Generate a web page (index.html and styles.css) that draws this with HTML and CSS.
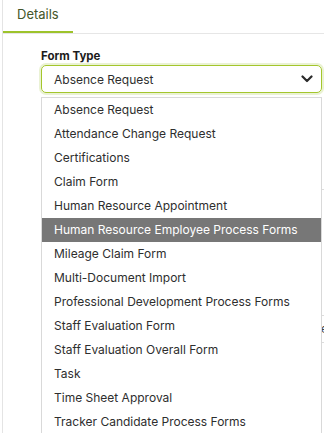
FILE: index.html
```html
<!DOCTYPE html>
<html lang="en">
<head>
  <meta charset="UTF-8">
  <title>Details</title>
  <link rel="stylesheet" href="styles.css">
</head>
<body>
  <div class="page">
    <div class="tabs">
      <div class="tab active">Details</div>
    </div>

    <div class="form">
      <label class="field-label">Form Type</label>
      <div class="select-wrap">
        <div class="select">
          <span>Absence Request</span>
          <svg class="chevron" width="12" height="8" viewBox="0 0 12 8">
            <path d="M1.5 1.5 L6 6 L10.5 1.5" fill="none" stroke="#2b2b2b" stroke-width="2.2" stroke-linecap="round" stroke-linejoin="round"/>
          </svg>
        </div>

        <ul class="options">
          <li>Absence Request</li>
          <li>Attendance Change Request</li>
          <li>Certifications</li>
          <li>Claim Form</li>
          <li>Human Resource Appointment</li>
          <li class="selected">Human Resource Employee Process Forms</li>
          <li>Mileage Claim Form</li>
          <li>Multi-Document Import</li>
          <li>Professional Development Process Forms</li>
          <li>Staff Evaluation Form</li>
          <li>Staff Evaluation Overall Form</li>
          <li>Task</li>
          <li>Time Sheet Approval</li>
          <li>Tracker Candidate Process Forms</li>
        </ul>
      </div>

      <!-- fields hidden under the open list -->
      <div class="behind">
        <div class="behind-line"></div>
        <div class="behind-box">Due date</div>
      </div>
    </div>
  </div>
</body>
</html>
```

FILE: styles.css
```css
/* Details tab with open form type dropdown */
body {
  margin: 0;
  font-family: Inter, "Noto Sans", sans-serif;
  background-color: #fff;
  color: #2e2e2e;
  overflow: hidden;
}

.page {
  margin-left: 2px;
  height: 433px;
  border-left: 1px solid #e4e4e4;
}

.tabs {
  display: flex;
  border-bottom: 1px solid #e6e6e6;
}

.tab {
  height: 31px;
  line-height: 29px;
  padding: 0 14px;
  font-size: 13px;
  color: #44562a;
}

.tab.active {
  border-bottom: 2px solid #9dc32b;
}

.form {
  padding: 14px 0 0 38px;
}

.field-label {
  display: block;
  font-size: 11.5px;
  font-weight: 700;
  color: #1c1c1c;
  line-height: 16px;
  margin-bottom: 1px;
}

.select-wrap {
  position: relative;
  width: 281px;
}

.select {
  display: flex;
  align-items: center;
  justify-content: space-between;
  height: 26px;
  padding: 0 8px 0 12px;
  border: 1px solid #a4c62c;
  border-radius: 5px;
  box-shadow: 0 0 0 2px #eaf2d4;
  font-size: 12px;
  color: #2e2e2e;
}

.options {
  position: absolute;
  top: 32px;
  left: 0;
  width: 279px;
  margin: 0;
  padding: 0;
  list-style: none;
  background-color: #fff;
  border: 1px solid #d9d9d9;
  z-index: 2;
}

.options li {
  height: 24px;
  line-height: 24px;
  padding-left: 12px;
  font-size: 12px;
  color: #2e2e2e;
  white-space: nowrap;
}

.options li.selected {
  background-color: #777;
  color: #fff;
}

.behind {
  padding-top: 96px;
}

.behind-line {
  height: 1px;
  background-color: #dcdcdc;
  margin-left: 250px;
}

.behind-box {
  margin-top: 125px;
  margin-left: 236px;
  height: 26px;
  line-height: 26px;
  border-top: 1px solid #dcdcdc;
  border-bottom: 1px solid #dcdcdc;
  font-size: 12px;
  color: #444;
  text-align: right;
  white-space: nowrap;
}
```
